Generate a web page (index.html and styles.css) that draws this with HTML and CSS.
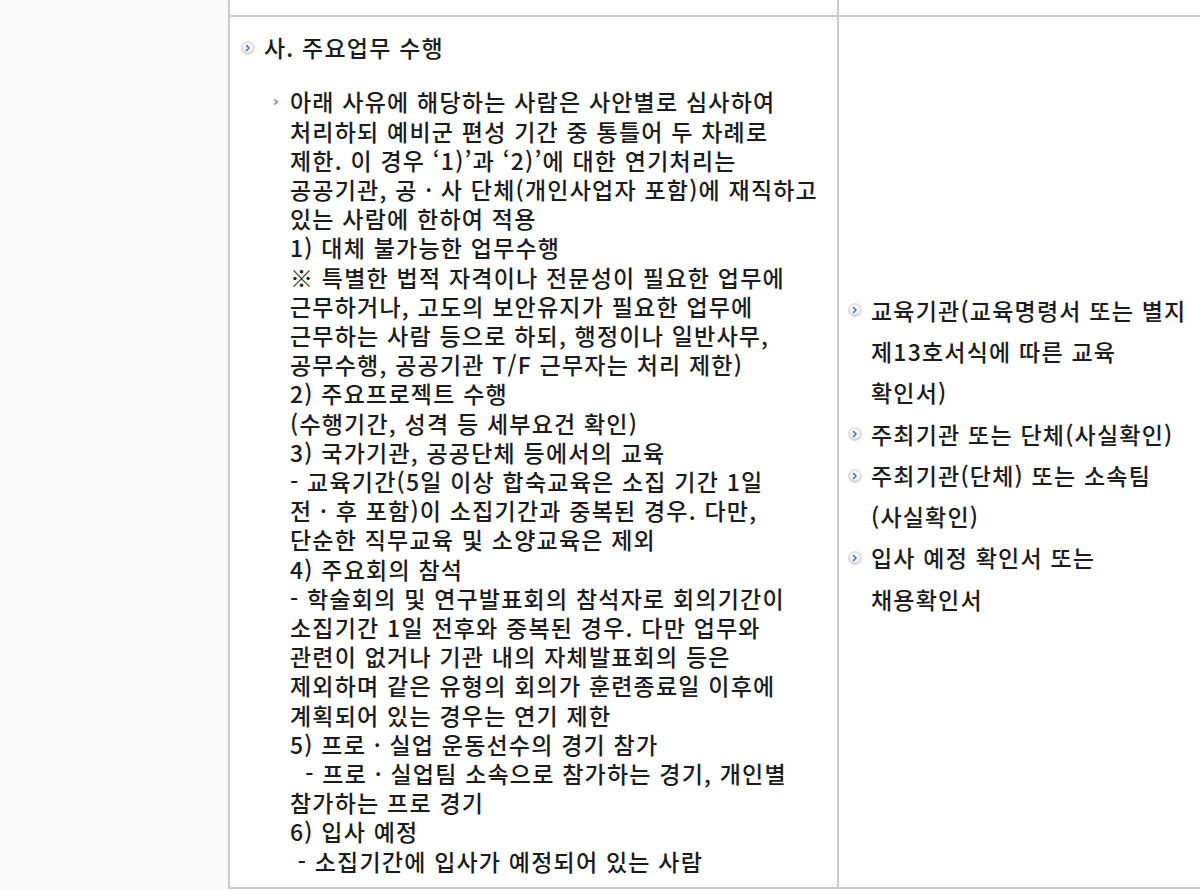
FILE: index.html
```html
<!DOCTYPE html>
<html lang="ko">
<head>
<meta charset="utf-8">
<title>예비군 연기 사유</title>
<link rel="stylesheet" href="styles.css">
</head>
<body>
<table class="grid">
  <colgroup>
    <col class="col-side">
    <col class="col-main">
    <col class="col-docs">
  </colgroup>
  <tr>
    <th class="side" rowspan="2"></th>
    <td class="prev prev-main"></td>
    <td class="prev prev-docs"></td>
  </tr>
  <tr>
    <td class="cell-main">
      <ul class="list">
        <li class="item">
          <span class="ico"><svg class="ico-circle" viewBox="0 0 14 14" aria-hidden="true"><defs><radialGradient id="rg1" cx="50%" cy="40%" r="60%"><stop offset="0" stop-color="#ffffff"/><stop offset="0.6" stop-color="#f4f4f4"/><stop offset="1" stop-color="#cfcfcf"/></radialGradient></defs><circle cx="7" cy="7" r="6.3" fill="url(#rg1)" stroke="#d2d2d2" stroke-width="1"/><path d="M5.6 4.6 L8 7 L5.6 9.4" fill="none" stroke="#3f74d4" stroke-width="1.7" stroke-linecap="round" stroke-linejoin="round"/></svg></span>
          <div class="item-body">
            <p class="item-title">사. 주요업무 수행</p>
            <ul class="sublist">
              <li class="subitem">
                <span class="subico"><svg viewBox="0 0 6 8" aria-hidden="true"><path d="M1.3 1.5 L4.3 4 L1.3 6.5" fill="none" stroke="#5b86d6" stroke-width="1.5" stroke-linejoin="round"/></svg></span>
                <p class="subtext">아래 사유에 해당하는 사람은 사안별로 심사하여<br>처리하되 예비군 편성 기간 중 통틀어 두 차례로<br>제한. 이 경우 ‘1)’과 ‘2)’에 대한 연기처리는<br>공공기관, 공 · 사 단체(개인사업자 포함)에 재직하고<br>있는 사람에 한하여 적용<br>1) 대체 불가능한 업무수행<br>※ 특별한 법적 자격이나 전문성이 필요한 업무에<br>근무하거나, 고도의 보안유지가 필요한 업무에<br>근무하는 사람 등으로 하되, 행정이나 일반사무,<br>공무수행, 공공기관 T/F 근무자는 처리 제한)<br>2) 주요프로젝트 수행<br>(수행기간, 성격 등 세부요건 확인)<br>3) 국가기관, 공공단체 등에서의 교육<br>- 교육기간(5일 이상 합숙교육은 소집 기간 1일<br>전 · 후 포함)이 소집기간과 중복된 경우. 다만,<br>단순한 직무교육 및 소양교육은 제외<br>4) 주요회의 참석<br>- 학술회의 및 연구발표회의 참석자로 회의기간이<br>소집기간 1일 전후와 중복된 경우. 다만 업무와<br>관련이 없거나 기관 내의 자체발표회의 등은<br>제외하며 같은 유형의 회의가 훈련종료일 이후에<br>계획되어 있는 경우는 연기 제한<br>5) 프로 · 실업 운동선수의 경기 참가<br>&nbsp;&nbsp;- 프로 · 실업팀 소속으로 참가하는 경기, 개인별<br>참가하는 프로 경기<br>6) 입사 예정<br>&nbsp;- 소집기간에 입사가 예정되어 있는 사람</p>
              </li>
            </ul>
          </div>
        </li>
      </ul>
    </td>
    <td class="cell-docs">
      <ul class="list">
        <li class="item">
          <span class="ico"><svg class="ico-circle" viewBox="0 0 14 14" aria-hidden="true"><defs><radialGradient id="rg2" cx="50%" cy="40%" r="60%"><stop offset="0" stop-color="#ffffff"/><stop offset="0.6" stop-color="#f4f4f4"/><stop offset="1" stop-color="#cfcfcf"/></radialGradient></defs><circle cx="7" cy="7" r="6.3" fill="url(#rg2)" stroke="#d2d2d2" stroke-width="1"/><path d="M5.6 4.6 L8 7 L5.6 9.4" fill="none" stroke="#3f74d4" stroke-width="1.7" stroke-linecap="round" stroke-linejoin="round"/></svg></span>
          <p class="doc-text">교육기관(교육명령서 또는 별지<br>제13호서식에 따른 교육<br>확인서)</p>
        </li>
        <li class="item">
          <span class="ico"><svg class="ico-circle" viewBox="0 0 14 14" aria-hidden="true"><circle cx="7" cy="7" r="6.3" fill="url(#rg2)" stroke="#d2d2d2" stroke-width="1"/><path d="M5.6 4.6 L8 7 L5.6 9.4" fill="none" stroke="#3f74d4" stroke-width="1.7" stroke-linecap="round" stroke-linejoin="round"/></svg></span>
          <p class="doc-text">주최기관 또는 단체(사실확인)</p>
        </li>
        <li class="item">
          <span class="ico"><svg class="ico-circle" viewBox="0 0 14 14" aria-hidden="true"><circle cx="7" cy="7" r="6.3" fill="url(#rg2)" stroke="#d2d2d2" stroke-width="1"/><path d="M5.6 4.6 L8 7 L5.6 9.4" fill="none" stroke="#3f74d4" stroke-width="1.7" stroke-linecap="round" stroke-linejoin="round"/></svg></span>
          <p class="doc-text">주최기관(단체) 또는 소속팀<br>(사실확인)</p>
        </li>
        <li class="item">
          <span class="ico"><svg class="ico-circle" viewBox="0 0 14 14" aria-hidden="true"><circle cx="7" cy="7" r="6.3" fill="url(#rg2)" stroke="#d2d2d2" stroke-width="1"/><path d="M5.6 4.6 L8 7 L5.6 9.4" fill="none" stroke="#3f74d4" stroke-width="1.7" stroke-linecap="round" stroke-linejoin="round"/></svg></span>
          <p class="doc-text">입사 예정 확인서 또는<br>채용확인서</p>
        </li>
      </ul>
    </td>
  </tr>
</table>
</body>
</html>
```

FILE: styles.css
```css
html, body {
  margin: 0;
  padding: 0;
  background: #ffffff;
}

body {
  width: 1200px;
  height: 890px;
  overflow: hidden;
  font-family: "Noto Sans CJK KR", "Noto Sans", sans-serif;
  color: #1c1c1c;
  font-size: 23px;
  font-weight: 500;
  letter-spacing: 1.2px;
}

.grid {
  border-collapse: separate;
  border-spacing: 0;
  table-layout: fixed;
  width: 1200px;
}

.col-side { width: 230px; }
.col-main { width: 609px; }
.col-docs { width: 361px; }

.side {
  background: #fafafa;
  border-right: 2px solid #cccccc;
  padding: 0;
}

.prev {
  height: 15px;
  padding: 0;
  border-bottom: 2px solid #cccccc;
}

.prev-main,
.cell-main {
  border-right: 2px solid #cccccc;
}

.cell-main,
.cell-docs {
  border-bottom: 2px solid #cccccc;
}

.cell-main {
  vertical-align: top;
  padding: 10px 4px 11px 11px;
}

.cell-docs {
  vertical-align: middle;
  padding: 6px 0 0 9px;
}

.list,
.sublist {
  list-style: none;
  margin: 0;
  padding: 0;
}

.item {
  display: flex;
  align-items: flex-start;
  gap: 9px;
}

.ico {
  flex: none;
  height: 41.3px;
  display: flex;
  align-items: center;
}

.ico-circle {
  width: 14px;
  height: 14px;
  display: block;
}

.item-title,
.doc-text {
  margin: 0;
  line-height: 41.3px;
  white-space: nowrap;
}

.sublist {
  margin: 19px 0 0 9px;
}

.subitem {
  display: flex;
  align-items: flex-start;
  gap: 11px;
}

.subico {
  flex: none;
  height: 29.2px;
  display: flex;
  align-items: center;
}

.subico svg {
  width: 6px;
  height: 8px;
  display: block;
}

.subtext {
  margin: 0;
  line-height: 29.2px;
  white-space: nowrap;
}
```
